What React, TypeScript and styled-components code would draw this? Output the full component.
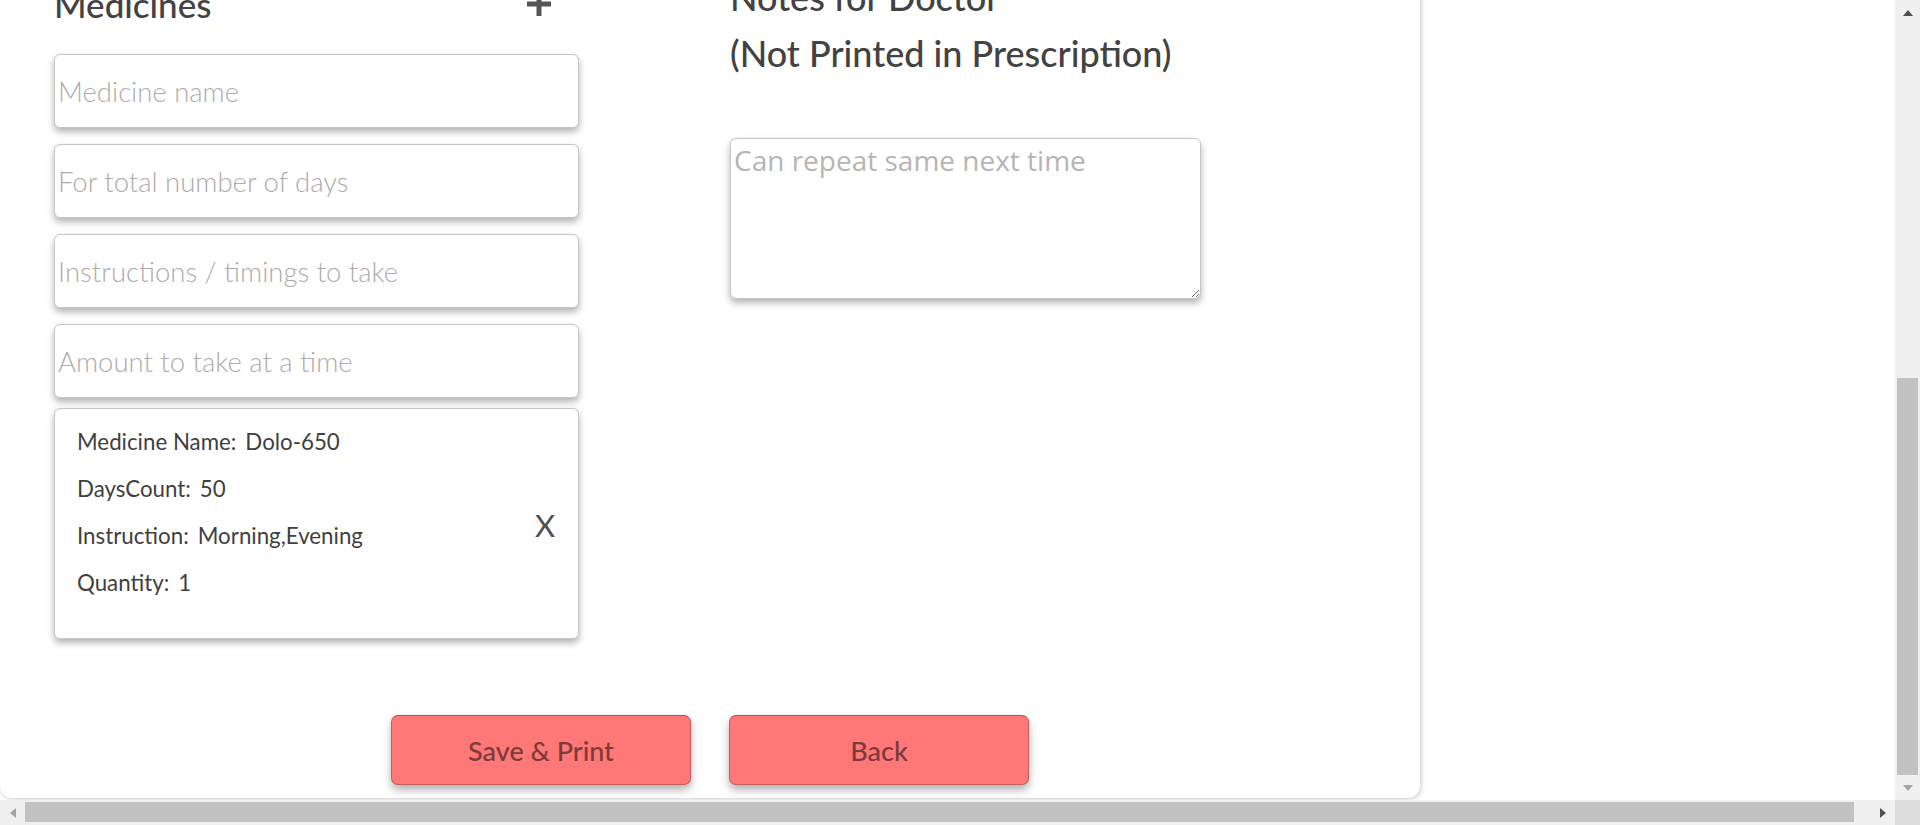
import React from "react";
import styled, { createGlobalStyle } from "styled-components";

const Global = createGlobalStyle`
  html, body { margin: 0; padding: 0; background: #ffffff; overflow: hidden; }
  body { font-family: Lato, "Noto Sans", sans-serif; color: #444; }
  * { box-sizing: border-box; }
`;

const Frame = styled.div`
  width: 1920px;
  height: 825px;
  display: grid;
  grid-template-columns: 1fr 25px;
  grid-template-rows: 1fr 25px;
  background: #fff;
`;

const Viewport = styled.div`
  overflow: hidden;
  background: #fff;
`;

const Page = styled.div`
  margin-top: -60px;
  padding-bottom: 2px;
`;

const Card = styled.section`
  width: 1420px;
  background: #fff;
  border-radius: 12px;
  box-shadow: 1px 1px 5px rgba(0, 0, 0, 0.22);
  padding: 29px 0 13px 0;
`;

const Columns = styled.div`
  display: grid;
  grid-template-columns: 525px 471px;
  column-gap: 151px;
  padding-left: 54px;
  align-items: start;
`;

const Column = styled.div`
  display: flex;
  flex-direction: column;
`;

const HeaderRow = styled.div`
  display: flex;
  align-items: center;
  justify-content: space-between;
  height: 40px;
  margin-top: 15px;
  margin-bottom: 30px;
  padding-right: 28px;
`;

const Heading = styled.h2`
  margin: 0;
  font-family: Lato, "Noto Sans", sans-serif;
  font-weight: 500;
  font-size: 35px;
  line-height: 40px;
  color: #424242;
`;

const NotesHeading = styled(Heading)`
  font-size: 36px;
  line-height: 56px;
  margin-bottom: 57px;
`;

const AddButton = styled.button`
  border: 0;
  background: transparent;
  padding: 0;
  width: 24px;
  height: 24px;
  display: flex;
  cursor: pointer;
`;

const FieldStack = styled.div`
  display: flex;
  flex-direction: column;
  gap: 16px;
`;

const Field = styled.input`
  width: 100%;
  height: 74px;
  border: 1px solid #c6c6c6;
  border-radius: 6px;
  box-shadow: 0 4px 7px rgba(0, 0, 0, 0.3);
  padding: 0 3px;
  font-family: Lato, "Noto Sans", sans-serif;
  font-size: 27.5px;
  font-weight: 300;
  color: #444;
  background: #fff;
  outline: none;
  &::placeholder { color: #b1aaaa; }
`;

const MedCard = styled.div`
  height: 231px;
  margin-top: -6px;
  border: 1px solid #c6c6c6;
  border-radius: 6px;
  box-shadow: 0 4px 7px rgba(0, 0, 0, 0.3);
  padding: 9px 23px 32px 22px;
  display: flex;
  align-items: center;
  background: #fff;
`;

const InfoList = styled.div`
  flex: 1;
  align-self: flex-start;
  display: flex;
  flex-direction: column;
`;

const InfoRow = styled.div`
  display: flex;
  gap: 9px;
  height: 47px;
  align-items: center;
  font-size: 22.3px;
  font-weight: 400;
  color: #3f3f3f;
`;

const RemoveButton = styled.button`
  border: 0;
  background: transparent;
  padding: 0;
  font-family: Lato, "Noto Sans", sans-serif;
  font-size: 31px;
  font-weight: 400;
  color: #505050;
  cursor: pointer;
  margin-top: 25px;
`;

const Notes = styled.textarea`
  width: 471px;
  height: 161px;
  border: 1px solid #c6c6c6;
  border-radius: 6px;
  box-shadow: 0 4px 7px rgba(0, 0, 0, 0.3);
  padding: 2px 3px;
  font-family: "Open Sans", sans-serif;
  font-size: 28px;
  color: #444;
  outline: none;
  background: #fff;
  &::placeholder { color: #bab3b3; }
`;

const Actions = styled.div`
  display: flex;
  justify-content: center;
  gap: 38px;
  margin-top: 76px;
`;

const ActionButton = styled.button`
  width: 300px;
  height: 70px;
  background: #ff7878;
  border: 1px solid #c95a5a;
  border-top-color: #b84f4f;
  border-radius: 7px;
  box-shadow: 0 5px 8px rgba(0, 0, 0, 0.3);
  font-family: Lato, "Noto Sans", sans-serif;
  font-size: 27px;
  font-weight: 500;
  color: #7e3a3a;
  cursor: pointer;
`;

const VBar = styled.div`
  background: #f0f0f0;
  display: flex;
  flex-direction: column;
`;

const HBar = styled.div`
  background: #f0f0f0;
  display: flex;
`;

const ArrowButton = styled.div`
  width: 25px;
  height: 25px;
  flex: none;
  display: flex;
  align-items: center;
  justify-content: center;
`;

const Arrow = styled.span<{ $dir: "up" | "down" | "left" | "right"; $dim?: boolean }>`
  width: 0;
  height: 0;
  ${({ $dir, $dim }) => {
    const c = $dim ? "#a3a3a3" : "#505050";
    if ($dir === "up") return `border-left:5.5px solid transparent;border-right:5.5px solid transparent;border-bottom:6px solid ${c};`;
    if ($dir === "down") return `border-left:5.5px solid transparent;border-right:5.5px solid transparent;border-top:6px solid ${c};`;
    if ($dir === "left") return `border-top:5.5px solid transparent;border-bottom:5.5px solid transparent;border-right:6px solid ${c};`;
    return `border-top:5.5px solid transparent;border-bottom:5.5px solid transparent;border-left:6px solid ${c};`;
  }}
`;

const VTrack = styled.div`
  flex: 1;
  display: flex;
  flex-direction: column;
  justify-content: flex-end;
  padding: 0 2px 0 2px;
`;

const VThumb = styled.div`
  height: 397px;
  background: #c1c1c1;
`;

const HTrack = styled.div`
  flex: 1;
  display: flex;
  padding: 2px 0 3px 0;
`;

const HThumb = styled.div`
  width: 1829px;
  background: #c1c1c1;
`;

const Corner = styled.div`
  background: #dcdcdc;
`;

const PlusIcon = () => (
  <svg width="24" height="24" viewBox="0 0 24 24">
    <rect x="9.5" y="0" width="5" height="24" fill="#555" />
    <rect x="0" y="9.5" width="24" height="5" fill="#555" />
  </svg>
);

const medicine = [
  ["Medicine Name:", "Dolo-650"],
  ["DaysCount:", "50"],
  ["Instruction:", "Morning,Evening"],
  ["Quantity:", "1"],
];

export default function App() {
  return (
    <>
      <Global />
      <Frame>
        <Viewport>
          <Page>
            <Card>
              <Columns>
                <Column>
                  <HeaderRow>
                    <Heading>Medicines</Heading>
                    <AddButton aria-label="Add medicine">
                      <PlusIcon />
                    </AddButton>
                  </HeaderRow>
                  <FieldStack>
                    <Field placeholder="Medicine name" />
                    <Field placeholder="For total number of days" />
                    <Field placeholder="Instructions / timings to take" />
                    <Field placeholder="Amount to take at a time" />
                    <MedCard>
                      <InfoList>
                        {medicine.map(([k, v]) => (
                          <InfoRow key={k}>
                            <span>{k}</span>
                            <span>{v}</span>
                          </InfoRow>
                        ))}
                      </InfoList>
                      <RemoveButton>X</RemoveButton>
                    </MedCard>
                  </FieldStack>
                </Column>
                <Column>
                  <NotesHeading>
                    Notes for Doctor
                    <br />
                    (Not Printed in Prescription)
                  </NotesHeading>
                  <Notes placeholder="Can repeat same next time" />
                </Column>
              </Columns>
              <Actions>
                <ActionButton>Save &amp; Print</ActionButton>
                <ActionButton>Back</ActionButton>
              </Actions>
            </Card>
          </Page>
        </Viewport>
        <VBar>
          <ArrowButton>
            <Arrow $dir="up" />
          </ArrowButton>
          <VTrack>
            <VThumb />
          </VTrack>
          <ArrowButton>
            <Arrow $dir="down" $dim />
          </ArrowButton>
        </VBar>
        <HBar>
          <ArrowButton>
            <Arrow $dir="left" $dim />
          </ArrowButton>
          <HTrack>
            <HThumb />
          </HTrack>
          <ArrowButton>
            <Arrow $dir="right" />
          </ArrowButton>
        </HBar>
        <Corner />
      </Frame>
    </>
  );
}
